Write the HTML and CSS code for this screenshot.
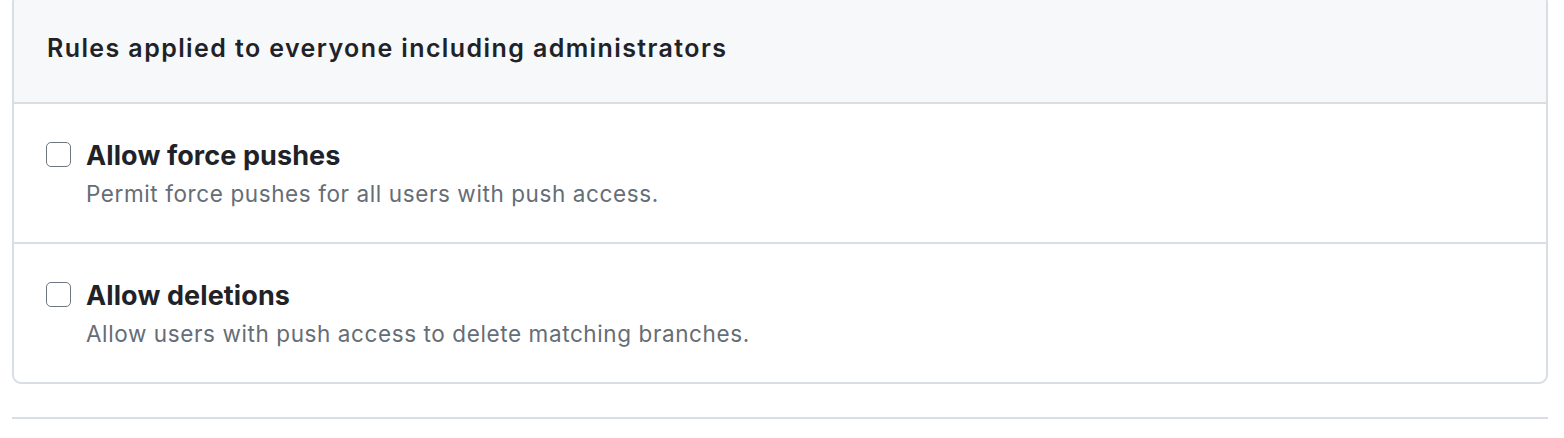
FILE: index.html
```html
<!DOCTYPE html>
<html>
<head>
<meta charset="utf-8">
<link rel="stylesheet" href="styles.css">
</head>
<body>
<div class="page">
  <div class="box">
    <div class="box-header">
      <h3 class="box-title">Rules applied to everyone including administrators</h3>
    </div>
    <div class="box-row">
      <label class="check">
        <span class="checkbox"></span>
        <span class="check-text">
          <span class="check-title">Allow force pushes</span>
          <span class="check-desc">Permit force pushes for all users with push access.</span>
        </span>
      </label>
    </div>
    <div class="box-row">
      <label class="check">
        <span class="checkbox"></span>
        <span class="check-text">
          <span class="check-title">Allow deletions</span>
          <span class="check-desc">Allow users with push access to delete matching branches.</span>
        </span>
      </label>
    </div>
  </div>
  <hr class="divider">
</div>
</body>
</html>
```

FILE: styles.css
```css
html, body {
  margin: 0;
  padding: 0;
  background: #ffffff;
}

body {
  font-family: Inter, "Noto Sans", "Liberation Sans", sans-serif;
  color: #1f2328;
}

.page {
  padding: 0 16px 0 12px;
  margin-top: -6px;
}

.box {
  border: 2px solid #d8dee4;
  border-radius: 9px;
  overflow: hidden;
}

.box-header {
  background: #f6f8fa;
  border-bottom: 2px solid #d8dee4;
  height: 106px;
  display: flex;
  align-items: center;
  padding: 0 33px;
}

.box-title {
  margin: 0;
  font-size: 25px;
  font-weight: 600;
  line-height: 1.5;
  letter-spacing: 1.4px;
}

.box-row {
  height: 138px;
  box-sizing: border-box;
  padding: 35px 32px 0;
}

.box-row + .box-row {
  height: 140px;
  border-top: 2px solid #d8dee4;
}

.check {
  display: flex;
  align-items: flex-start;
  gap: 15px;
}

.checkbox {
  box-sizing: border-box;
  width: 25px;
  height: 25px;
  border: 1.5px solid #6e7781;
  border-radius: 5px;
  margin-top: 3px;
  flex: none;
  background: #fff;
}

.check-text {
  display: flex;
  flex-direction: column;
  gap: 5px;
}

.check-title {
  font-size: 27px;
  font-weight: 700;
  line-height: 34px;
  letter-spacing: 0.1px;
}

.check-desc {
  font-size: 22.5px;
  color: #656d76;
  line-height: 32px;
  letter-spacing: 0.6px;
}

.divider {
  margin: 33px 0 0 0;
  border: 0;
  border-top: 2px solid #d8dee4;
}
```
